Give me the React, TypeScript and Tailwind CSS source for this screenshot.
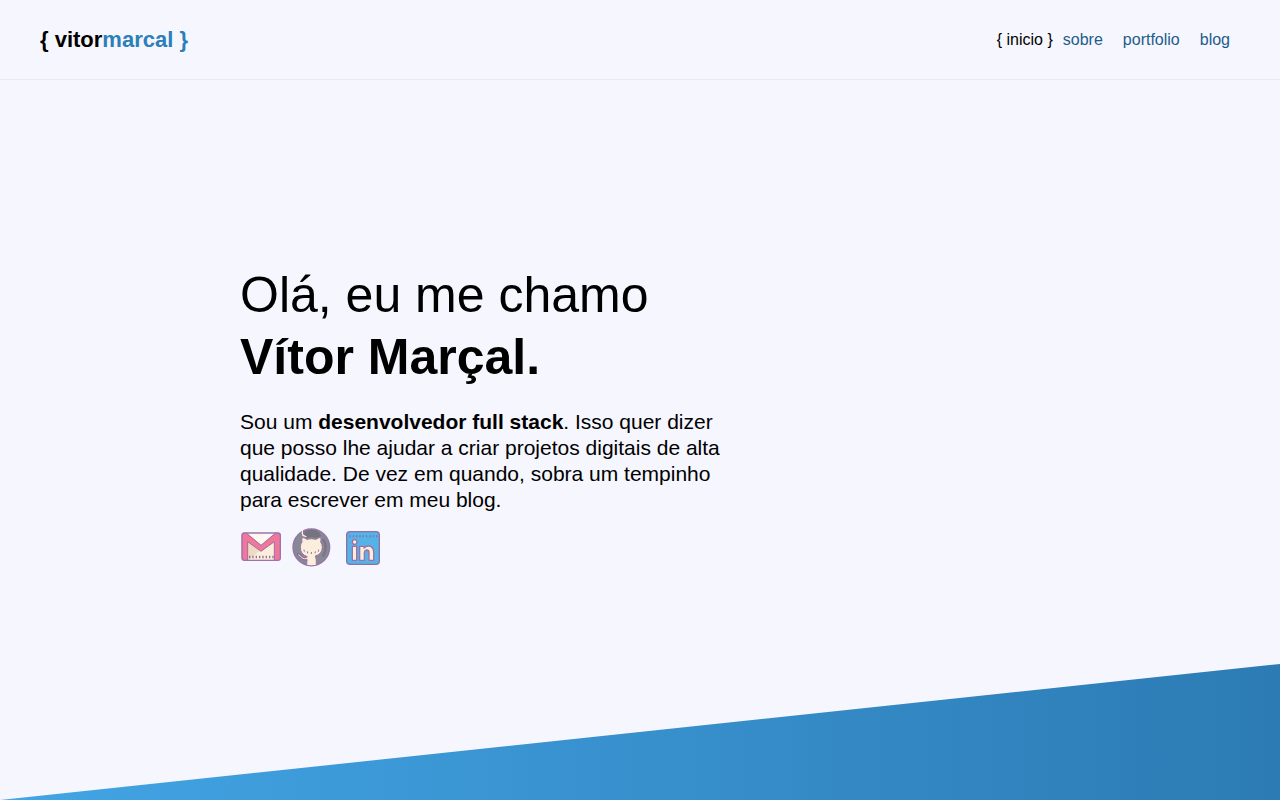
import React from 'react';

const navLinks = ['sobre', 'portfolio', 'blog'];

function GmailIcon() {
  return (
    <svg viewBox="12 6 126 126" className="size-[42px]" aria-hidden="true">
      <rect x="17" y="26" width="116" height="83" rx="8" fill="#fbeedd" />
      <path d="M33 28H117L75 66Z" fill="#fff8f0" />
      <path d="M35 107V53L70 80L40 107Z" fill="#efd9c2" />
      <path d="M17 34Q17 26 25 26H31L75 64L119 26H125Q133 26 133 34V101Q133 109 125 109H115V53L75 82L35 53V109H25Q17 109 17 101Z" fill="#f0769a" />
      <path d="M31 27L75 64L119 27M35 108V53L75 82L115 53V108" fill="none" stroke="#9a6ea6" strokeWidth="3" strokeLinejoin="round" />
      <rect x="18" y="27" width="115" height="82" rx="7" fill="none" stroke="#9a74ab" strokeWidth="4" />
      <path d="M39 99H113" stroke="#94709f" strokeWidth="7" strokeDasharray="4 6" />
    </svg>
  );
}

function GithubIcon() {
  return (
    <svg viewBox="12 6 126 126" className="size-[42px]" aria-hidden="true">
      <circle cx="76" cy="70" r="55" fill="#898995" stroke="#9673a8" strokeWidth="4" />
      <path d="M56 22Q78 12 100 24L105 37L91 42Q76 38 62 42L56 36Z" fill="#74747f" />
      <path d="M111 45Q128 70 110 98" fill="none" stroke="#777782" strokeWidth="7" />
      <path d="M50 20Q47 27 51 34L60 37" fill="none" stroke="#fff0dc" strokeWidth="4" strokeLinecap="round" />
      <path d="M54 19Q51 27 56 32L64 36" fill="none" stroke="#8d6399" strokeWidth="3" />
      <path d="M62 124L63 106Q53 109 45 104L50 101Q57 103 64 98Q43 92 43 70Q43 58 48 54Q46 47 49 40Q57 41 62 46Q76 42 90 46Q97 41 104 40Q106 47 104 54Q109 60 109 70Q109 90 88 96Q92 103 91 124Q76 127 62 124Z" fill="#fbeedd" stroke="#9a74a5" strokeWidth="3" strokeLinejoin="round" />
      <path d="M34 90Q43 92 47 100Q54 107 63 105" fill="none" stroke="#8d6399" strokeWidth="8" />
      <path d="M37 92Q43 94 47 101Q54 106 64 104" fill="none" stroke="#fbeedd" strokeWidth="3" />
      <path d="M54 77L55 83M64 82L65 88M76 84V90M88 82L87 88M98 77L97 83" stroke="#94709f" strokeWidth="3" />
    </svg>
  );
}

function LinkedinIcon() {
  return (
    <svg viewBox="0 6 126 126" className="size-[42px]" aria-hidden="true">
      <rect x="20" y="23" width="98" height="98" rx="10" fill="#56b3e8" stroke="#8d70aa" strokeWidth="4" />
      <path d="M28 37H114" stroke="#8074ae" strokeWidth="6" strokeDasharray="4 6" />
      <g fill="#fbeedd" stroke="#a070a5" strokeWidth="4" strokeLinejoin="round">
        <circle cx="44" cy="54" r="7" />
        <path d="M37 67H50V109H37Z" />
        <path d="M59 67H72V72Q78 65 87 66Q101 68 101 84V109H87V86Q87 78 80 78Q73 79 73 88V109H59Z" />
      </g>
    </svg>
  );
}

const contacts = [
  { label: 'E-mail', Icon: GmailIcon },
  { label: 'GitHub', Icon: GithubIcon },
  { label: 'LinkedIn', Icon: LinkedinIcon },
];

export default function App() {
  return (
    <div className="flex min-h-screen flex-col bg-[#f6f6fe] font-['Liberation_Sans',sans-serif] text-black">
      <header className="flex h-20 items-center justify-between border-b border-[#e9e9f1] px-10">
        <a href="#inicio" className="text-[22px] font-bold">
          {'{ vitor'}
          <span className="text-[#2c7fb8]">{'marcal }'}</span>
        </a>
        <nav className="flex items-center text-base">
          <a href="#inicio" aria-current="page">{'{ inicio }'}</a>
          {navLinks.map((link) => (
            <a key={link} href={`#${link}`} className="px-[10px] text-[#1c5d8b]">
              {link}
            </a>
          ))}
        </nav>
      </header>
      <main className="flex flex-1 flex-col justify-between">
        <section className="mx-auto w-full max-w-[800px] pt-[184px]">
          <div className="max-w-[480px]">
            <h1 className="text-[50px] leading-[62px]">
              Olá, eu me chamo <strong className="block">Vítor Marçal.</strong>
            </h1>
            <p className="mt-[21px] text-[21px] leading-[26px]">
              Sou um <strong>desenvolvedor full stack</strong>. Isso quer dizer que posso lhe ajudar a criar
              projetos digitais de alta qualidade. De vez em quando, sobra um tempinho para escrever em meu blog.
            </p>
            <div className="mt-[13px] flex gap-2">
              {contacts.map(({ label, Icon }) => (
                <a key={label} href={`#${label.toLowerCase()}`} aria-label={label}>
                  <Icon />
                </a>
              ))}
            </div>
          </div>
        </section>
        <div className="h-[17vh] bg-[linear-gradient(to_right,#43a5e5,#2c7bb4)] [clip-path:polygon(100%_0,100%_100%,0_100%)]" />
      </main>
    </div>
  );
}
